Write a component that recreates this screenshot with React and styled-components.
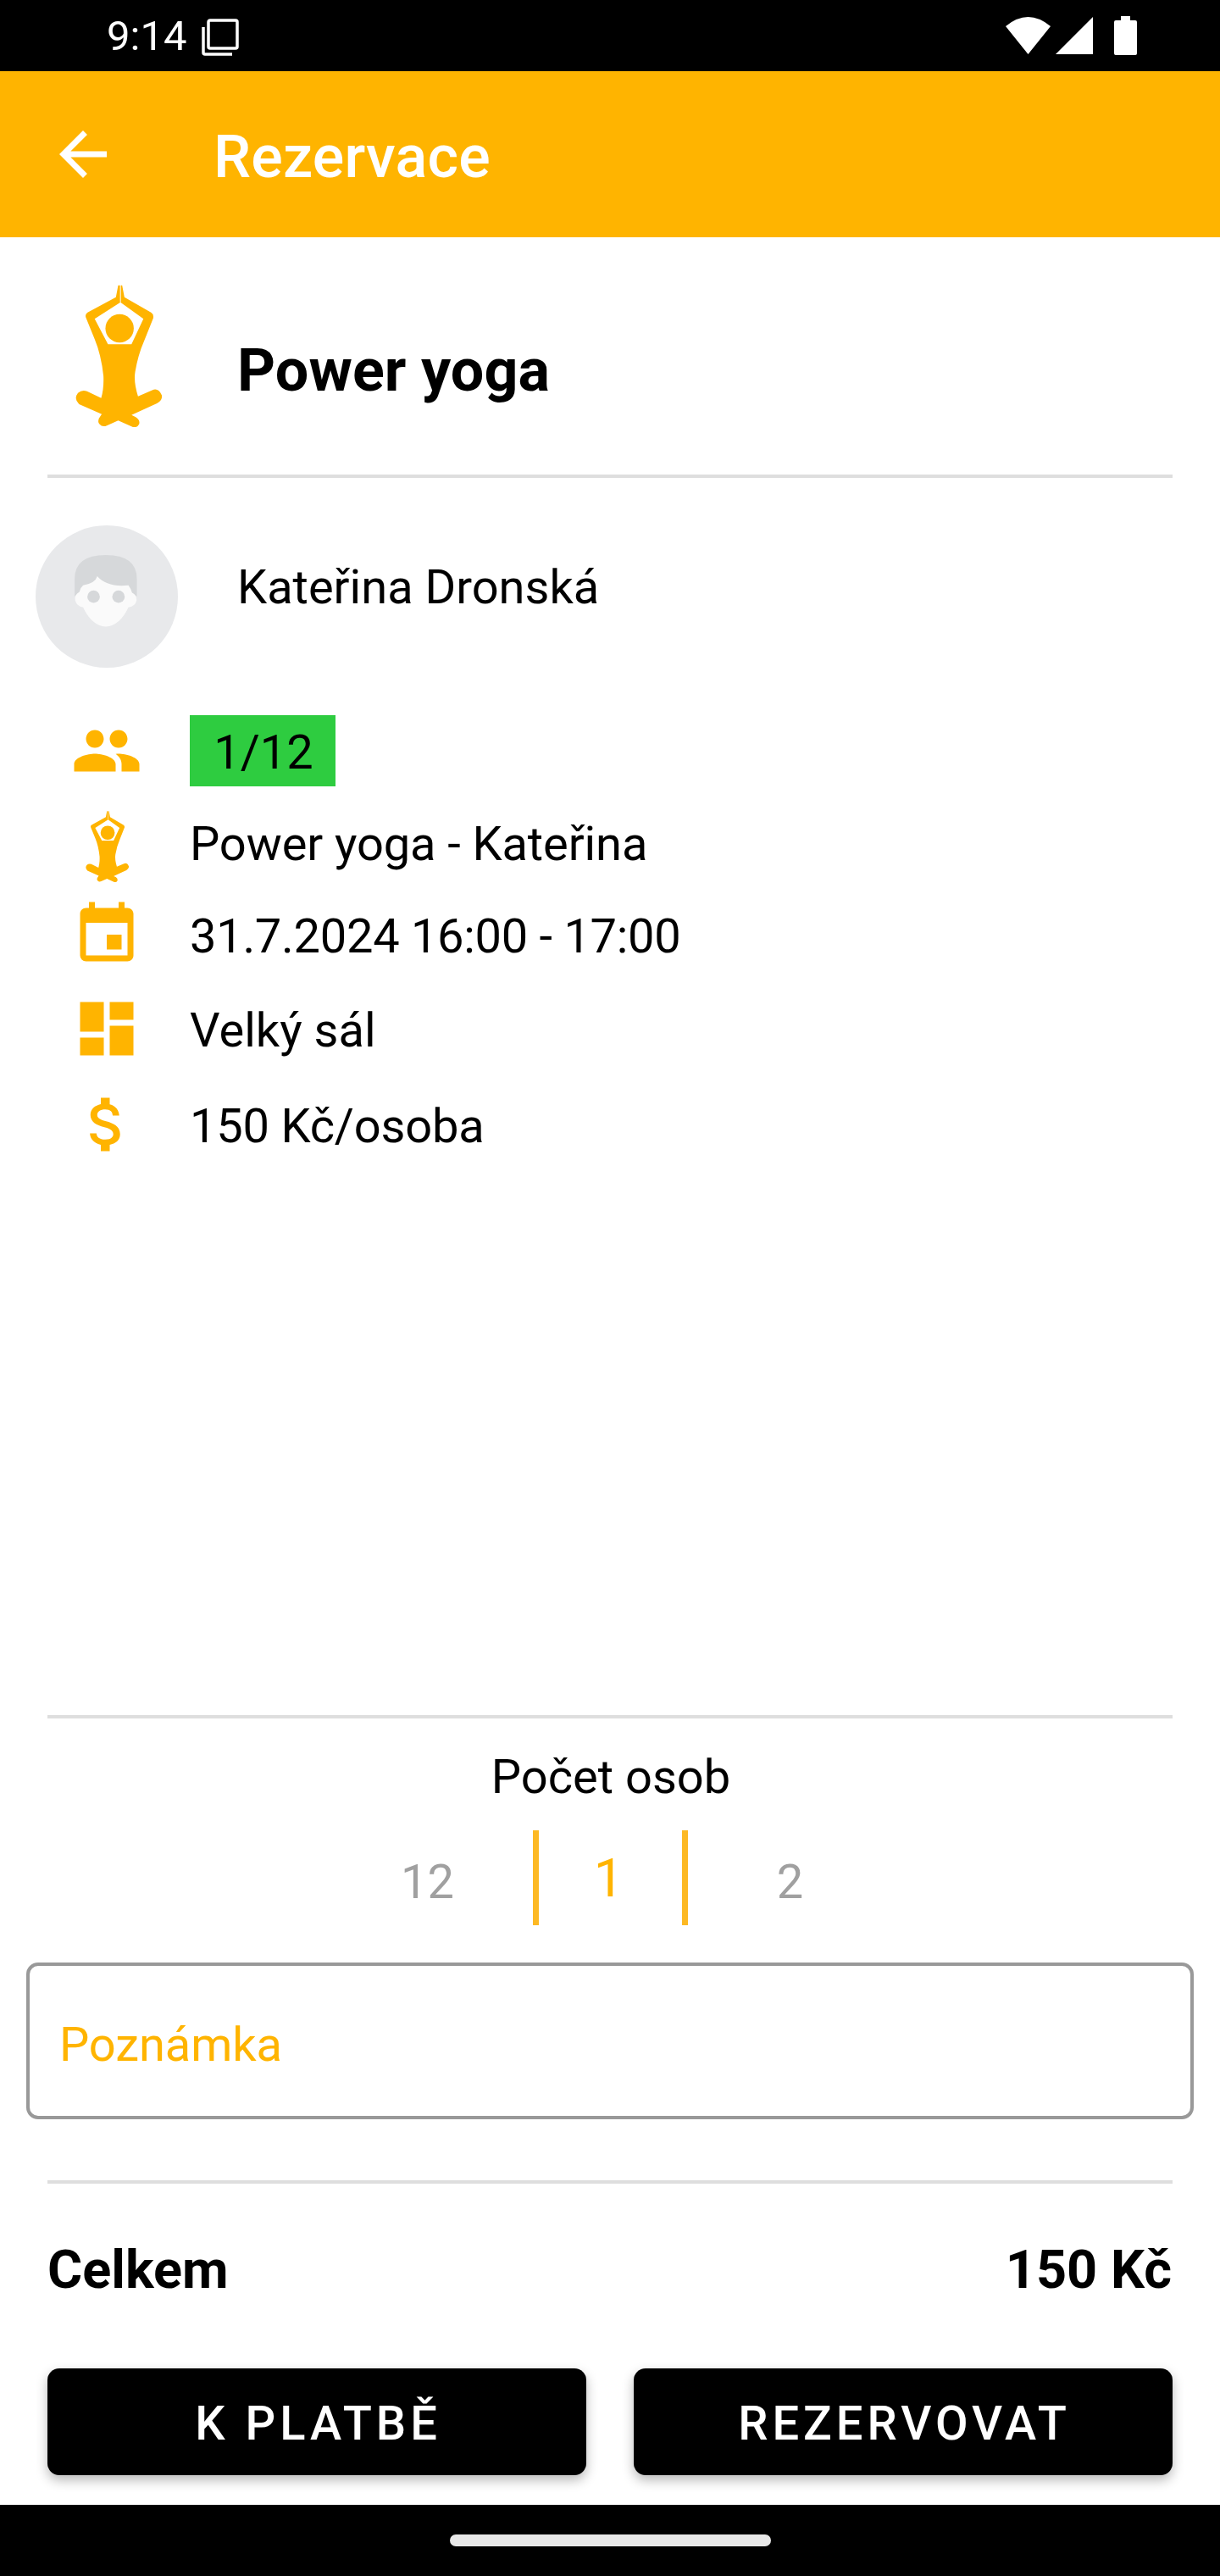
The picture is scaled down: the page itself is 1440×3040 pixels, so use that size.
import React from "react";
import styled, { createGlobalStyle } from "styled-components";
import { MdArrowBack, MdPeople, MdEvent, MdDashboard, MdAttachMoney } from "react-icons/md";

const YELLOW = "#ffb400";

const GlobalStyle = createGlobalStyle`
    html, body {
        margin: 0;
        padding: 0;
        background: #fff;
    }
    * {
        box-sizing: border-box;
    }
`

const Page = styled.div`
    width: 1440px;
    height: 3040px;
    display: flex;
    flex-direction: column;
    background: #fff;
    color: #000;
    font-family: Roboto, "Liberation Sans", sans-serif;
    overflow: hidden;
`
const StatusBar = styled.div`
    height: 84px;
    flex: none;
    display: flex;
    align-items: center;
    padding: 0 98px 0 126px;
    background: #000;
    color: #fff;
`
const Clock = styled.span`
    font-size: 49px;
    line-height: 57px;
    margin-right: 18px;
`
const StatusIcons = styled.div`
    margin-left: auto;
    display: flex;
    align-items: center;
`
const AppBar = styled.div`
    height: 196px;
    flex: none;
    display: flex;
    align-items: center;
    padding-left: 56px;
    background: ${YELLOW};
    color: #fff;
    font-size: 84px;
`
const Title = styled.div`
    margin-left: 112px;
    padding-top: 5px;
    font-size: 70px;
    font-weight: 500;
    line-height: 82px;
    letter-spacing: 0.2px;
`
const Header = styled.div`
    height: 280px;
    flex: none;
    display: flex;
    align-items: center;
    padding-left: 89px;
`
const HeaderTitle = styled.div`
    margin-left: 89px;
    padding-top: 33px;
    font-size: 70px;
    font-weight: 700;
    line-height: 82px;
    letter-spacing: 0.1px;
`
const Divider = styled.div`
    height: 4px;
    flex: none;
    margin: ${(p) => p.$top || 0}px 56px 0;
    background: #dedede;
`
const Trainer = styled.div`
    display: flex;
    flex: none;
    margin: 56px 0 0 42px;
`
const Avatar = styled.div`
    width: 168px;
    height: 168px;
    border-radius: 50%;
    background: #e8e9eb;
`
const TrainerName = styled.div`
    margin: 40px 0 0 70px;
    font-size: 56px;
    line-height: 66px;
`
const Details = styled.div`
    flex: 1;
    display: flex;
    flex-direction: column;
    padding-left: 84px;
`
const Row = styled.div`
    display: flex;
    align-items: center;
    height: 84px;
    margin-top: ${(p) => p.$top}px;
    font-size: 84px;
    color: ${YELLOW};
`
const RowIcon = styled.div`
    width: 84px;
    height: 84px;
    flex: none;
    display: flex;
    justify-content: center;
`
const RowText = styled.div`
    margin-left: 56px;
    padding-top: ${(p) => p.$shift || 0}px;
    padding-bottom: ${(p) => p.$lift || 0}px;
    font-size: 56px;
    line-height: 66px;
    letter-spacing: ${(p) => p.$tight || 0}px;
    color: #000;
`
const Badge = styled.div`
    width: 172px;
    height: 84px;
    margin-left: 56px;
    padding: 4px 0 0 2px;
    display: flex;
    align-items: center;
    justify-content: center;
    background: #2ecc40;
    color: #000;
    font-size: 56px;
`
const Label = styled.div`
    margin-top: 36px;
    padding-left: 2px;
    text-align: center;
    font-size: 56px;
    line-height: 66px;
`
const Picker = styled.div`
    display: flex;
    justify-content: center;
    height: 112px;
    margin-top: 30px;
`
const PickerCell = styled.div`
    width: ${(p) => (p.$active ? 183 : 245)}px;
    display: flex;
    align-items: center;
    justify-content: center;
    padding: ${(p) => (p.$active ? 2 : 10)}px 3px 0 0;
    border-left: ${(p) => (p.$active ? "7px solid #fdb924" : "none")};
    border-right: ${(p) => (p.$active ? "7px solid #fdb924" : "none")};
    font-size: ${(p) => (p.$active ? 63 : 56)}px;
    line-height: ${(p) => (p.$active ? 74 : 66)}px;
    color: ${(p) => (p.$active ? YELLOW : "#a0a0a0")};
`
const NoteInput = styled.input`
    display: block;
    width: 1378px;
    height: 185px;
    flex: none;
    margin: 44px 0 0 31px;
    padding: 8px 35px 0;
    border: 4px solid #999;
    border-radius: 14px;
    outline: none;
    background: #fff;
    font-family: inherit;
    font-size: 56px;
    letter-spacing: -0.1px;
    &::placeholder {
        color: ${YELLOW};
        opacity: 1;
    }
`
const Total = styled.div`
    display: flex;
    justify-content: space-between;
    margin: 65px 57px 0 56px;
    font-size: 63px;
    font-weight: 700;
    line-height: 74px;
`
const Buttons = styled.div`
    display: flex;
    justify-content: space-between;
    margin: 79px 56px 35px;
`
const Button = styled.button`
    width: 636px;
    height: 126px;
    padding: 3px 0 0 3px;
    border: none;
    border-radius: 14px;
    background: #000;
    color: #fff;
    font-family: inherit;
    font-size: 56px;
    font-weight: 500;
    letter-spacing: 5px;
    box-shadow: 0 6px 14px rgba(0, 0, 0, 0.28);
`
const NavBar = styled.div`
    height: 84px;
    flex: none;
    display: flex;
    justify-content: center;
    padding-top: 35px;
    background: #000;
`
const NavHandle = styled.div`
    width: 379px;
    height: 14px;
    border-radius: 7px;
    background: #e8e8e8;
`

const CopyIcon = () => (
    <svg width="44" height="44" viewBox="0 0 44 44" fill="none" stroke="#fff" strokeWidth="3.5" style={{ marginTop: 3 }}>
        <rect x="8" y="2" width="34" height="33" rx="2" />
        <path d="M2 10v30q0 2 2 2h32" />
    </svg>
)

const WifiIcon = () => (
    <svg width="54" height="44" viewBox="0 0 54 44" fill="#fff">
        <path d="M26.5 44 0 11Q26.500-11 53 11Z" />
    </svg>
)

const SignalIcon = () => (
    <svg width="44" height="44" viewBox="0 0 44 44" fill="#fff" style={{ marginLeft: 5 }}>
        <path d="M44 0V44H0Z" />
    </svg>
)

const BatteryIcon = () => (
    <svg width="27" height="46" viewBox="0 0 27 46" fill="#fff" style={{ marginLeft: 25 }}>
        <path d="M8 0h11v5h6q2 0 2 2v37q0 2-2 2H2q-2 0-2-2V7q0-2 2-2h6Z" />
    </svg>
)

const YogaIcon = ({ width }) => (
    <svg width={width} height={(width * 504) / 305} viewBox="207 78 305 504">
        <path
            fill={YELLOW}
            fillRule="evenodd"
            d="M358 80 350 122 250 176Q240 182 244 194L275 270Q298 325 306 400Q308 445 298 478L248 454Q230 447 216 460Q200 480 220 500L300 535 296 541Q282 558 292 570Q302 582 318 575L358 557 410 580Q425 584 432 570Q436 555 420 545L405 538 495 497Q515 485 512 468Q500 440 478 450L428 472Q412 420 418 385Q428 325 450 275L482 195Q484 182 474 176L380 122 372 80ZM366 140 447 198 405 288H322L275 198Z"
        />
        <circle cx="363" cy="232" r="50" fill={YELLOW} />
        <path d="M366 78V140" stroke="#fff" strokeWidth="3" />
    </svg>
)

const FaceIcon = () => (
    <svg width="168" height="168" viewBox="67 60 503 503">
        <path fill="#d6d8da" d="M205 310V250Q205 165 315 165Q425 165 425 250V310Z" />
        <path
            fill="#fafafa"
            d="M285 240Q278 265 235 272Q225 280 222 295Q203 305 207 325Q212 345 235 350Q265 415 315 418Q365 415 395 350Q420 345 424 325Q425 305 408 298Q405 285 395 272Q320 280 285 240Z"
        />
        <circle cx="272" cy="312" r="22" fill="#d6d8da" />
        <circle cx="360" cy="312" r="22" fill="#d6d8da" />
    </svg>
)

export default function App() {
    return (
        <Page>
            <GlobalStyle />
            <StatusBar>
                <Clock>9:14</Clock>
                <CopyIcon />
                <StatusIcons>
                    <WifiIcon />
                    <SignalIcon />
                    <BatteryIcon />
                </StatusIcons>
            </StatusBar>
            <AppBar>
                <MdArrowBack />
                <Title>Rezervace</Title>
            </AppBar>
            <Header>
                <YogaIcon width={102} />
                <HeaderTitle>Power yoga</HeaderTitle>
            </Header>
            <Divider />
            <Trainer>
                <Avatar>
                    <FaceIcon />
                </Avatar>
                <TrainerName>Kateřina Dronská</TrainerName>
            </Trainer>
            <Details>
                <Row $top={56}>
                    <RowIcon><MdPeople /></RowIcon>
                    <Badge>1/12</Badge>
                </Row>
                <Row $top={29}>
                    <RowIcon><YogaIcon width={51} /></RowIcon>
                    <RowText $lift={6} $tight={-0.1}>Power yoga - Kateřina</RowText>
                </Row>
                <Row $top={20}>
                    <RowIcon><MdEvent /></RowIcon>
                    <RowText $shift={3} $tight={-0.28}>31.7.2024 16:00 - 17:00</RowText>
                </Row>
                <Row $top={27}>
                    <RowIcon><MdDashboard /></RowIcon>
                    <RowText $shift={3}>Velký sál</RowText>
                </Row>
                <Row $top={29}>
                    <RowIcon><MdAttachMoney /></RowIcon>
                    <RowText $shift={3} $tight={-0.2}>150 Kč/osoba</RowText>
                </Row>
            </Details>
            <Divider />
            <Label>Počet osob</Label>
            <Picker>
                <PickerCell>12</PickerCell>
                <PickerCell $active>1</PickerCell>
                <PickerCell>2</PickerCell>
            </Picker>
            <NoteInput placeholder="Poznámka" readOnly />
            <Divider $top={72} />
            <Total>
                <span>Celkem</span>
                <span>150 Kč</span>
            </Total>
            <Buttons>
                <Button>K PLATBĚ</Button>
                <Button>REZERVOVAT</Button>
            </Buttons>
            <NavBar>
                <NavHandle />
            </NavBar>
        </Page>
    );
}
